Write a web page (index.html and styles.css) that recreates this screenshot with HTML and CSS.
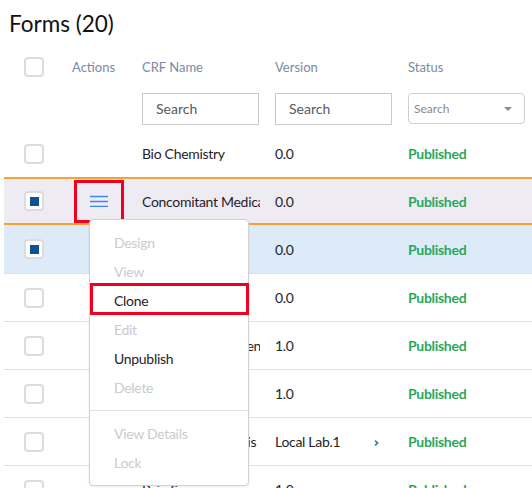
FILE: index.html
```html
<!DOCTYPE html>
<html lang="en">
<head>
<meta charset="utf-8">
<title>Forms</title>
<link rel="stylesheet" href="styles.css">
</head>
<body>
<div class="page">
  <h1 class="title">Forms (20)</h1>
  <div class="table">
    <div class="row head">
      <div class="cell"><span class="cb"></span></div>
      <div class="cell">Actions</div>
      <div class="cell">CRF Name</div>
      <div class="cell">Version</div>
      <div class="cell">Status</div>
    </div>
    <div class="row filters">
      <div class="cell"></div>
      <div class="cell"></div>
      <div class="cell"><div class="input">Search</div></div>
      <div class="cell"><div class="input">Search</div></div>
      <div class="cell"><div class="select"><span>Search</span><span class="caret"></span></div></div>
    </div>
    <div class="row data first">
      <div class="cell"><span class="cb"></span></div>
      <div class="cell"></div>
      <div class="cell name">Bio Chemistry</div>
      <div class="cell">0.0</div>
      <div class="cell status">Published</div>
    </div>
    <div class="row data active">
      <div class="cell"><span class="cb checked"></span></div>
      <div class="cell">
        <div class="menu-btn">
          <svg width="18" height="12" viewBox="0 0 18 12"><path d="M0 1.5h18M0 6.5h18M0 11.5h18" stroke="#3f86ee" stroke-width="1.6"/></svg>
        </div>
      </div>
      <div class="cell name">Concomitant Medications</div>
      <div class="cell">0.0</div>
      <div class="cell status">Published</div>
    </div>
    <div class="row data selected">
      <div class="cell"><span class="cb checked"></span></div>
      <div class="cell"></div>
      <div class="cell name">Demographics</div>
      <div class="cell">0.0</div>
      <div class="cell status">Published</div>
    </div>
    <div class="row data">
      <div class="cell"><span class="cb"></span></div>
      <div class="cell"></div>
      <div class="cell name">Adverse Events</div>
      <div class="cell">0.0</div>
      <div class="cell status">Published</div>
    </div>
    <div class="row data">
      <div class="cell"><span class="cb"></span></div>
      <div class="cell"></div>
      <div class="cell name">Urinary Drug Screen</div>
      <div class="cell">1.0</div>
      <div class="cell status">Published</div>
    </div>
    <div class="row data">
      <div class="cell"><span class="cb"></span></div>
      <div class="cell"></div>
      <div class="cell name">Vital Signs</div>
      <div class="cell">1.0</div>
      <div class="cell status">Published</div>
    </div>
    <div class="row data">
      <div class="cell"><span class="cb"></span></div>
      <div class="cell"></div>
      <div class="cell name">Laboratory Analysis</div>
      <div class="cell ver-link"><span>Local Lab.1</span>
        <svg class="chev" width="5" height="6" viewBox="0 0 5 6"><path d="M1 0.6L3.6 3L1 5.4" fill="none" stroke="#1a7fc4" stroke-width="1.6"/></svg>
      </div>
      <div class="cell status">Published</div>
    </div>
    <div class="row data">
      <div class="cell"><span class="cb"></span></div>
      <div class="cell"></div>
      <div class="cell name">Pain Score</div>
      <div class="cell">1.0</div>
      <div class="cell status">Published</div>
    </div>
  </div>

  <div class="menu">
    <div class="item disabled">Design</div>
    <div class="item disabled">View</div>
    <div class="item highlight">Clone</div>
    <div class="item disabled">Edit</div>
    <div class="item">Unpublish</div>
    <div class="item disabled">Delete</div>
    <div class="divider"></div>
    <div class="item disabled">View Details</div>
    <div class="item disabled">Lock</div>
  </div>
</div>
</body>
</html>
```

FILE: styles.css
```css
html, body {
  margin: 0;
  padding: 0;
  width: 532px;
  height: 488px;
  overflow: hidden;
  background: #ffffff;
}

.page {
  position: relative;
  width: 532px;
  height: 488px;
  overflow: hidden;
  font-family: "Lato", "Liberation Sans", sans-serif;
  color: #1f2328;
}

.title {
  margin: 0;
  padding: 11px 0 0 9px;
  height: 41px;
  box-sizing: border-box;
  font-size: 22.5px;
  font-weight: 400;
  line-height: 26px;
  color: #111;
}

.table {
  margin-left: 4px;
}

.row {
  display: grid;
  grid-template-columns: 48px 70px 133px 133px 1fr;
  padding-left: 20px;
  align-items: center;
  box-sizing: border-box;
}

.cell {
  display: flex;
  align-items: center;
  min-width: 0;
}

.head {
  height: 51px;
  font-size: 13px;
  color: #7a8aa4;
}

.filters {
  height: 33px;
  margin-bottom: 5px;
}

.input {
  width: 117px;
  height: 32px;
  box-sizing: border-box;
  border: 1px solid #c9c9c9;
  padding-left: 13px;
  display: flex;
  align-items: center;
  font-size: 14px;
  color: #555b61;
}

.select {
  width: 117px;
  height: 31px;
  box-sizing: border-box;
  border: 1px solid #cfcfcf;
  border-radius: 4px;
  padding: 0 12px 0 5px;
  display: flex;
  align-items: center;
  justify-content: space-between;
  font-size: 12px;
  color: #8a8a8a;
}

.caret {
  width: 0;
  height: 0;
  border-left: 4px solid transparent;
  border-right: 4px solid transparent;
  border-top: 4px solid #8c8c8c;
}

.cb {
  width: 20px;
  height: 20px;
  box-sizing: border-box;
  border: 2px solid #dcdcdc;
  border-radius: 4px;
  background: #fff;
  display: flex;
  align-items: center;
  justify-content: center;
}

.cb.checked::before {
  content: "";
  width: 9px;
  height: 9px;
  background: #0d5291;
}

.data {
  height: 48px;
  border-bottom: 1px solid #e1e1e1;
  font-size: 14px;
  letter-spacing: -0.3px;
}

.data.first {
  height: 47px;
  border-bottom: none;
}

.data.active {
  background: #eeebf3;
  border-top: 2px solid #f7a132;
  border-bottom: 2px solid #f7a132;
}

.data.selected {
  background: #dcebf7;
  height: 49px;
}

.name {
  width: 118px;
  overflow: hidden;
  white-space: nowrap;
}

.status {
  color: #2aa85a;
  font-weight: 700;
}

.ver-link {
  gap: 34px;
}

.chev {
  margin-top: 2px;
}

.menu-btn {
  width: 50px;
  height: 43px;
  margin-left: 2px;
  box-sizing: border-box;
  border: 3px solid #f0001e;
  display: flex;
  align-items: center;
  justify-content: center;
}

.menu {
  position: absolute;
  left: 89px;
  top: 219px;
  width: 160px;
  box-sizing: border-box;
  padding: 8px 0;
  background: #fff;
  border: 1px solid #d2d2d2;
  border-radius: 4px;
  box-shadow: 0 1px 3px rgba(0, 0, 0, 0.08);
  font-size: 14px;
  letter-spacing: -0.3px;
}

.item {
  position: relative;
  height: 29px;
  line-height: 29px;
  padding-left: 24px;
  color: #1f2328;
}

.item.disabled {
  color: #c9cbcd;
}

.item.highlight::after {
  content: "";
  position: absolute;
  left: 0;
  right: -1px;
  top: -3px;
  bottom: 0;
  border: 3px solid #f0001e;
}

.divider {
  height: 1px;
  margin: 8px 0;
  background: #e3e3e3;
}
```
